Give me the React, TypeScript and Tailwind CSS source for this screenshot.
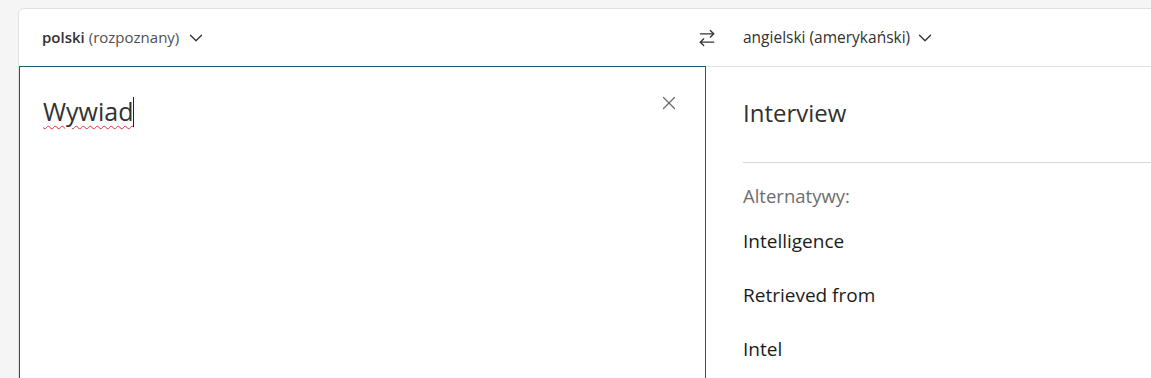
import { ChevronDown, X, ArrowRightLeft } from 'lucide-react'

const alternatives = ['Intelligence', 'Retrieved from', 'Intel']

export default function App() {
  return (
    <div
      className="h-[378px] w-[1151px] overflow-hidden bg-[#f5f5f5] pl-[18px] pt-[8px]"
      style={{ fontFamily: '"Open Sans", "Noto Sans", sans-serif' }}
    >
      <div className="flex h-[400px] w-[1160px] flex-col rounded-tl-md border border-[#e1e1e1] bg-white">
        <div className="flex h-[58px] shrink-0 items-center border-b border-[#e1e1e1]">
          <div className="flex w-[687px] items-center pl-[23px] text-[15px] text-[#323130]">
            <span className="font-semibold">polski</span>
            <span className="ml-1 text-[#505050]">(rozpoznany)</span>
            <ChevronDown className="ml-[6px] h-[22px] w-[22px]" strokeWidth={1.4} />
          </div>
          <div className="flex items-center text-[15.5px] text-[#323130]">
            <ArrowRightLeft className="-ml-[9px] h-[20px] w-[20px] text-[#333]" strokeWidth={1.6} />
            <span className="ml-[26px]">angielski (amerykański)</span>
            <ChevronDown className="ml-[4px] h-[22px] w-[22px]" strokeWidth={1.4} />
          </div>
        </div>
        <div className="-mt-px flex flex-1">
          <div className="relative w-[687px] border border-[#1e5b73] pl-[23px] pt-[24px]">
            <span className="text-[25px] leading-[40px] text-[#323130] underline decoration-wavy decoration-[#e0303a] decoration-1 underline-offset-4">
              Wywiad
            </span>
            <span className="inline-block h-[30px] w-px translate-y-[6px] bg-[#222]" />
            <X className="absolute right-[25px] top-[25px] h-[22px] w-[22px] text-[#6b6b6b]" strokeWidth={1.4} />
          </div>
          <div className="flex-1 pl-[37px] pt-[27px]">
            <div className="border-b border-[#d9d9d9] pb-[29px] text-[24px] leading-[40px] text-[#323130]">
              Interview
            </div>
            <div className="mt-[18px] text-[18.5px] leading-[30px] text-[#6e6e6e]">Alternatywy:</div>
            <div className="mt-[15px] flex flex-col gap-[24px]">
              {alternatives.map((a) => (
                <div key={a} className="text-[19px] leading-[30px] text-[#1b1b1b]">
                  {a}
                </div>
              ))}
            </div>
          </div>
        </div>
      </div>
    </div>
  )
}
